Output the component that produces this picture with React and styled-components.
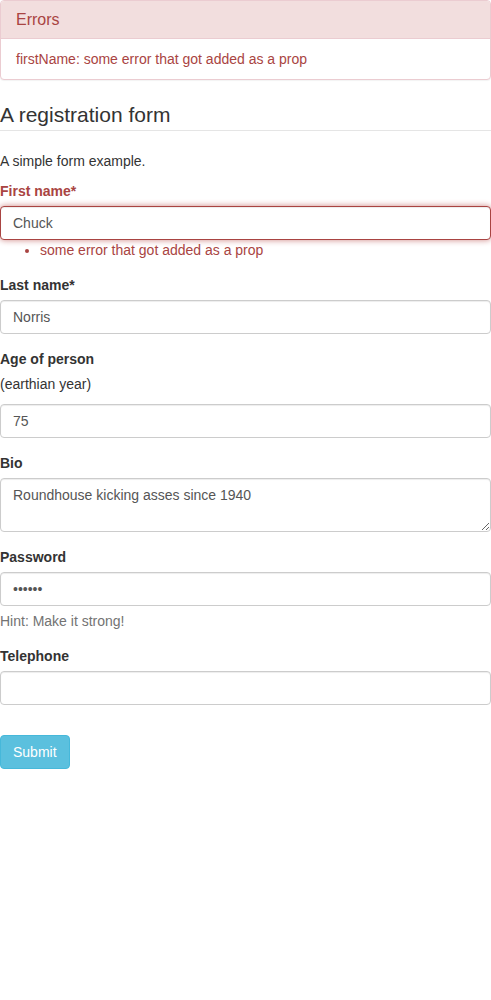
import React from 'react'
import styled, { createGlobalStyle } from 'styled-components'

const GlobalStyle = createGlobalStyle`
	* {
		box-sizing: border-box;
	}
	body {
		margin: 0;
		background: #fff;
		color: #333;
		font-family: "Liberation Sans", Arial, sans-serif;
		font-size: 14px;
		line-height: 20px;
	}
`;

const App = () => {
	return (
		<Page>
			<GlobalStyle />
			<Panel>
				<PanelHeading>
					<PanelTitle>Errors</PanelTitle>
				</PanelHeading>
				<PanelItem>firstName: some error that got added as a prop</PanelItem>
			</Panel>

			<form onSubmit={e => e.preventDefault()}>
				<Fieldset>
					<Legend>A registration form</Legend>
					<Description>A simple form example.</Description>

					<FormGroup>
						<Label $error>First name*</Label>
						<Input $error type="text" defaultValue="Chuck" />
						<ErrorList>
							<li>some error that got added as a prop</li>
						</ErrorList>
					</FormGroup>

					<FormGroup>
						<Label>Last name*</Label>
						<Input type="text" defaultValue="Norris" />
					</FormGroup>

					<FormGroup>
						<Label>Age of person</Label>
						<Description>(earthian year)</Description>
						<Input type="text" defaultValue="75" />
					</FormGroup>

					<FormGroup>
						<Label>Bio</Label>
						<TextArea rows={2} defaultValue="Roundhouse kicking asses since 1940" />
					</FormGroup>

					<FormGroup>
						<Label>Password</Label>
						<Input type="password" defaultValue="noneed" />
						<HelpBlock>Hint: Make it strong!</HelpBlock>
					</FormGroup>

					<FormGroup>
						<Label>Telephone</Label>
						<Input type="tel" />
					</FormGroup>
				</Fieldset>
				<Actions>
					<SubmitButton type="submit">Submit</SubmitButton>
				</Actions>
			</form>
		</Page>
	);
};

const Page = styled.div`
	width: 491px;
`;

const Panel = styled.div`
	margin-bottom: 20px;
	background: #fff;
	border: 1px solid #ebccd1;
	border-radius: 4px;
	box-shadow: 0 1px 1px rgba(0, 0, 0, 0.05);
	overflow: hidden;
`;

const PanelHeading = styled.div`
	padding: 10px 15px 9px;
	background: #f2dede;
	color: #a94442;
	border-bottom: 1px solid #ebccd1;
`;

const PanelTitle = styled.h3`
	margin: 0;
	font-size: 16px;
	font-weight: 500;
	line-height: 18px;
`;

const PanelItem = styled.div`
	padding: 10px 15px;
	color: #a94442;
`;

const Fieldset = styled.fieldset`
	margin: 0;
	padding: 0;
	border: 0;
	min-width: 0;
`;

const Legend = styled.legend`
	display: block;
	width: 100%;
	padding: 0;
	margin-bottom: 20px;
	font-size: 21px;
	line-height: 30px;
	color: #333;
	border-bottom: 1px solid #e5e5e5;
`;

const Description = styled.p`
	margin: 0 0 10px;
`;

const FormGroup = styled.div`
	margin-bottom: 15px;
`;

const Label = styled.label`
	display: inline-block;
	margin-bottom: 5px;
	font-weight: 700;
	color: ${p => (p.$error ? '#a94442' : '#333')};
`;

const Input = styled.input`
	display: block;
	width: 100%;
	height: 34px;
	padding: 6px 12px;
	font-family: inherit;
	font-size: 14px;
	line-height: 20px;
	color: #555;
	background: #fff;
	border: 1px solid ${p => (p.$error ? '#a94442' : '#ccc')};
	border-radius: 4px;
	box-shadow: ${p =>
		p.$error
			? 'inset 0 1px 1px rgba(0,0,0,.075), 0 0 6px #ce8483'
			: 'inset 0 1px 1px rgba(0,0,0,.075)'};
	outline: none;
`;

const TextArea = styled.textarea`
	display: block;
	width: 100%;
	height: 54px;
	padding: 6px 12px;
	font-family: inherit;
	font-size: 14px;
	line-height: 20px;
	color: #555;
	border: 1px solid #ccc;
	border-radius: 4px;
	box-shadow: inset 0 1px 1px rgba(0, 0, 0, 0.075);
	outline: none;
`;

const ErrorList = styled.ul`
	margin: 0;
	padding-left: 40px;
	color: #a94442;
`;

const HelpBlock = styled.p`
	display: block;
	margin: 5px 0 10px;
	color: #737373;
`;

const Actions = styled.div`
	margin-top: 15px;
`;

const SubmitButton = styled.button`
	padding: 6px 12px;
	font-family: inherit;
	font-size: 14px;
	line-height: 20px;
	color: #fff;
	background: #5bc0de;
	border: 1px solid #46b8da;
	border-radius: 4px;
	cursor: pointer;
`;

export default App;
